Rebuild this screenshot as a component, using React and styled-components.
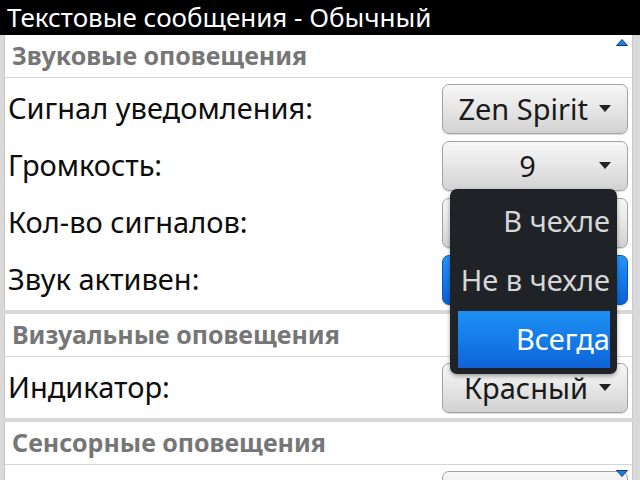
import React from "react";
import styled, { createGlobalStyle, css } from "styled-components";

const Global = createGlobalStyle`
    html, body {
        margin: 0;
        padding: 0;
        background: #d9d9d9;
    }
    * {
        box-sizing: border-box;
    }
`;

const Screen = styled.div`
    position: relative;
    width: 640px;
    height: 480px;
    overflow: hidden;
    background: #d9d9d9;
    font-family: "Noto Sans", "DejaVu Sans", sans-serif;
    display: flex;
    flex-direction: column;
`;

const TitleBar = styled.div`
    height: 35px;
    flex-shrink: 0;
    background: #000;
    color: #fff;
    font-size: 26px;
    line-height: 35px;
    padding-left: 7px;
    white-space: nowrap;
`;

const Content = styled.div`
    display: flex;
    flex-direction: column;
    gap: 4px;
    padding: 0 7px 0 4px;
`;

const Panel = styled.section`
    background: #fff;
    padding-bottom: 5px;
    border-left: 1px solid #c9c9c9;
    border-right: 1px solid #c9c9c9;
`;

const SectionHeader = styled.div`
    height: 43px;
    border-bottom: 1px solid #d6d6d6;
    display: flex;
    align-items: center;
    padding: 0 0 2px 7px;
    font-size: 25px;
    font-weight: 700;
    color: #767676;
    white-space: nowrap;
`;

const Rows = styled.div`
    display: flex;
    flex-direction: column;
    gap: 7px;
    padding: 6px 4px 0 3px;
`;

const Row = styled.div`
    height: 50px;
    display: flex;
    align-items: center;
    justify-content: space-between;
`;

const Label = styled.span`
    font-size: 29px;
    color: #0d0d0d;
    white-space: nowrap;
    padding-bottom: 4px;
`;

const Choice = styled.div`
    margin-left: auto;
    width: 186px;
    height: 50px;
    border-radius: 7px;
    display: flex;
    align-items: center;
    justify-content: flex-end;
    gap: 11px;
    padding: 0 16px 2px 8px;
    font-size: 29px;
    color: #1a1a1a;
    border: 1px solid #a3a3a3;
    background: linear-gradient(#f7f7f7 0%, #e6e6e6 50%, #d2d2d2 100%);
    box-shadow: 0 1px 1px rgba(0, 0, 0, 0.15);

    ${(p) =>
        p.$active &&
        css`
            border-color: #0a55c2;
            background: linear-gradient(#2596f5 0%, #157ae8 50%, #0b5fd6 100%);
        `}
`;

const ChoiceValue = styled.span`
    flex: 1;
    text-align: ${(p) => (p.$center ? "center" : "right")};
    padding-left: ${(p) => (p.$center ? "16px" : "0")};
    white-space: nowrap;
`;

const Caret = () => (
    <svg width="12" height="7" viewBox="0 0 12 7">
        <path d="M0 0 H12 L6 7 Z" fill="#222" />
    </svg>
);

const ScrollArrow = styled.svg`
    position: absolute;
    right: 12px;
    ${(p) => (p.$down ? "bottom: 3px;" : "top: 39px;")}
`;

const Menu = styled.div`
    position: absolute;
    left: 450px;
    top: 189px;
    width: 167px;
    height: 185px;
    background: #1f2227;
    border-radius: 7px;
    box-shadow: 0 2px 4px rgba(0, 0, 0, 0.35);
    padding: 4px 7px 6px 8px;
    display: flex;
    flex-direction: column;
    gap: 2px;
`;

const MenuItem = styled.div`
    height: 57px;
    display: flex;
    align-items: center;
    justify-content: flex-end;
    padding-bottom: 3px;
    font-size: 29px;
    color: #d6d6d6;
    white-space: nowrap;

    ${(p) =>
        p.$selected &&
        css`
            color: #fff;
            background: linear-gradient(#1c90f2 0%, #1479e6 55%, #0f63d7 100%);
        `}
`;

const sound = [
    { label: "Сигнал уведомления:", value: "Zen Spirit" },
    { label: "Громкость:", value: "9", center: true },
    { label: "Кол-во сигналов:", value: "" },
    { label: "Звук активен:", value: "", active: true },
];

export default function App() {
    return (
        <Screen>
            <Global />
            <TitleBar>Текстовые сообщения - Обычный</TitleBar>

            <Content>
                <Panel>
                    <SectionHeader>Звуковые оповещения</SectionHeader>
                    <Rows>
                        {sound.map((item) => (
                            <Row key={item.label}>
                                <Label>{item.label}</Label>
                                <Choice $active={item.active}>
                                    <ChoiceValue $center={item.center}>{item.value}</ChoiceValue>
                                    <Caret />
                                </Choice>
                            </Row>
                        ))}
                    </Rows>
                </Panel>

                <Panel>
                    <SectionHeader>Визуальные оповещения</SectionHeader>
                    <Rows>
                        <Row>
                            <Label>Индикатор:</Label>
                            <Choice>
                                <ChoiceValue>Красный</ChoiceValue>
                                <Caret />
                            </Choice>
                        </Row>
                    </Rows>
                </Panel>

                <Panel>
                    <SectionHeader>Сенсорные оповещения</SectionHeader>
                    <Rows>
                        <Row>
                            <Choice>
                                <ChoiceValue />
                                <Caret />
                            </Choice>
                        </Row>
                    </Rows>
                </Panel>
            </Content>

            <ScrollArrow width="12" height="7" viewBox="0 0 12 7">
                <path d="M0.5 6.5 L6 0.5 L11.5 6.5 Z" fill="#1f7fe0" stroke="#0b3f80" strokeWidth="1" />
            </ScrollArrow>
            <ScrollArrow $down width="12" height="7" viewBox="0 0 12 7">
                <path d="M0.5 0.5 L6 6.5 L11.5 0.5 Z" fill="#1f7fe0" stroke="#0b3f80" strokeWidth="1" />
            </ScrollArrow>

            <Menu>
                <MenuItem>В чехле</MenuItem>
                <MenuItem>Не в чехле</MenuItem>
                <MenuItem $selected>Всегда</MenuItem>
            </Menu>
        </Screen>
    );
}
